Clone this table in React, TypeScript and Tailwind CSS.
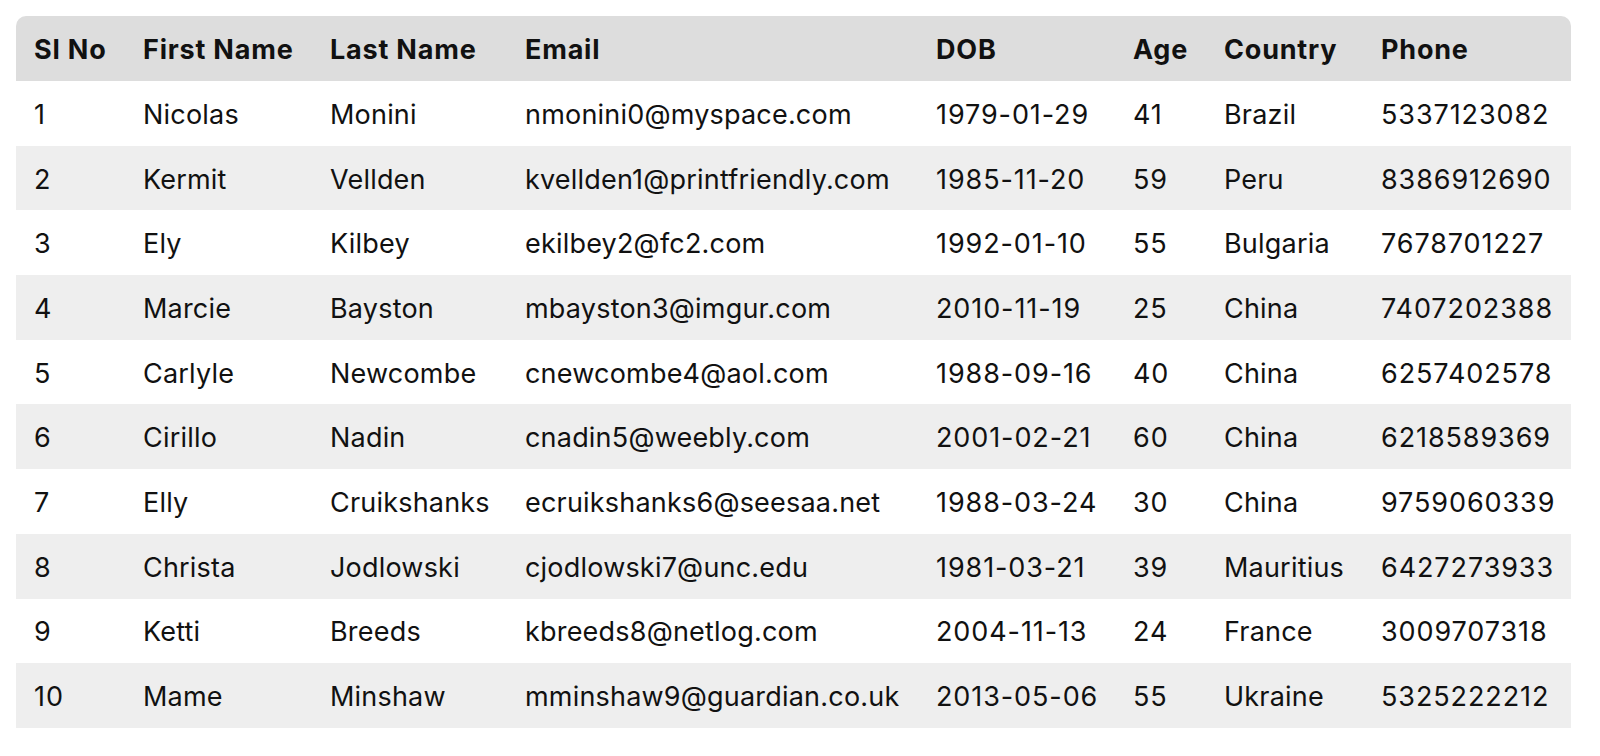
const rows = [
  [1, "Nicolas", "Monini", "nmonini0@myspace.com", "1979-01-29", 41, "Brazil", "5337123082"],
  [2, "Kermit", "Vellden", "kvellden1@printfriendly.com", "1985-11-20", 59, "Peru", "8386912690"],
  [3, "Ely", "Kilbey", "ekilbey2@fc2.com", "1992-01-10", 55, "Bulgaria", "7678701227"],
  [4, "Marcie", "Bayston", "mbayston3@imgur.com", "2010-11-19", 25, "China", "7407202388"],
  [5, "Carlyle", "Newcombe", "cnewcombe4@aol.com", "1988-09-16", 40, "China", "6257402578"],
  [6, "Cirillo", "Nadin", "cnadin5@weebly.com", "2001-02-21", 60, "China", "6218589369"],
  [7, "Elly", "Cruikshanks", "ecruikshanks6@seesaa.net", "1988-03-24", 30, "China", "9759060339"],
  [8, "Christa", "Jodlowski", "cjodlowski7@unc.edu", "1981-03-21", 39, "Mauritius", "6427273933"],
  [9, "Ketti", "Breeds", "kbreeds8@netlog.com", "2004-11-13", 24, "France", "3009707318"],
  [10, "Mame", "Minshaw", "mminshaw9@guardian.co.uk", "2013-05-06", 55, "Ukraine", "5325222212"],
];

const headers = ["Sl No", "First Name", "Last Name", "Email", "DOB", "Age", "Country", "Phone"];

// digits in the reference run wider than Inter's, so number columns get a bit more tracking
const numeric = [true, false, false, false, true, true, false, true];

export default function App() {
  return (
    <div className="bg-white min-h-[756px] pt-4 pl-4 font-['Inter',sans-serif] text-[27px] text-[#111]">
      <table className="table-fixed border-collapse w-[1555px]">
        <colgroup>
          <col className="w-[109px]" />
          <col className="w-[187px]" />
          <col className="w-[195px]" />
          <col className="w-[411px]" />
          <col className="w-[197px]" />
          <col className="w-[91px]" />
          <col className="w-[157px]" />
          <col className="w-[208px]" />
        </colgroup>
        <thead>
          <tr className="bg-[#dddddd]">
            {headers.map((h, i) => (
              <th
                key={h}
                className={
                  "h-[65px] px-[18px] pt-[2px] text-left font-bold tracking-[0.8px] leading-8 whitespace-nowrap " +
                  (i === 0 ? "rounded-tl-[10px]" : i === headers.length - 1 ? "rounded-tr-[10px]" : "")
                }
              >
                {h}
              </th>
            ))}
          </tr>
        </thead>
        <tbody>
          {rows.map((r, i) => (
            <tr key={i} className={i % 2 === 1 ? "bg-[#eeeeee]" : "bg-white"}>
              {r.map((c, j) => (
                <td
                  key={j}
                  className={
                    "h-[64.7px] px-[18px] pt-[3px] leading-8 whitespace-nowrap " +
                    (numeric[j] ? "tracking-[0.9px]" : "tracking-[0.2px]")
                  }
                >
                  {c}
                </td>
              ))}
            </tr>
          ))}
        </tbody>
      </table>
    </div>
  );
}
